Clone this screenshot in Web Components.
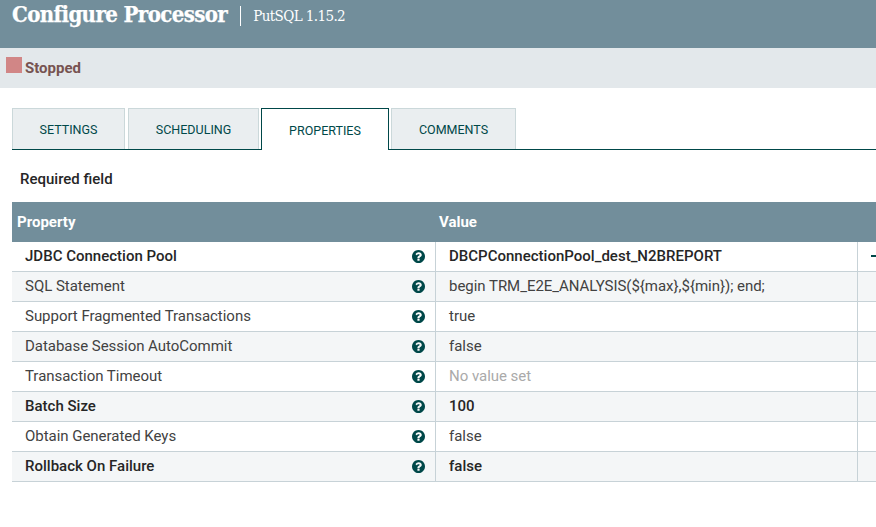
<!DOCTYPE html>
<html lang="en">
<head>
<meta charset="utf-8">
<title>Configure Processor</title>
<style>
html,body{margin:0;padding:0;background:#fff;height:527px;overflow:hidden}
body{font-family:Roboto,"Liberation Sans",sans-serif;color:#262626;display:flex;flex-direction:column;width:876px}
</style>
</head>
<body>
<nf-header title-text="Configure Processor" sub="PutSQL 1.15.2"></nf-header>
<nf-status>Stopped</nf-status>
<nf-tabs>
  <nf-tab w="113">SETTINGS</nf-tab>
  <nf-tab w="131">SCHEDULING</nf-tab>
  <nf-tab w="128" active>PROPERTIES</nf-tab>
  <nf-tab w="125">COMMENTS</nf-tab>
</nf-tabs>
<nf-required>Required field</nf-required>
<nf-table>
  <nf-row name="JDBC Connection Pool" value="DBCPConnectionPool_dest_N2BREPORT" strong action></nf-row>
  <nf-row name="SQL Statement" value="begin TRM_E2E_ANALYSIS(${max},${min}); end;" alt></nf-row>
  <nf-row name="Support Fragmented Transactions" value="true"></nf-row>
  <nf-row name="Database Session AutoCommit" value="false" alt></nf-row>
  <nf-row name="Transaction Timeout" value="No value set" unset></nf-row>
  <nf-row name="Batch Size" value="100" strong alt></nf-row>
  <nf-row name="Obtain Generated Keys" value="false"></nf-row>
  <nf-row name="Rollback On Failure" value="false" strong alt></nf-row>
</nf-table>
<script>
function shadow(el,html){el.attachShadow({mode:'open'}).innerHTML=html;}
customElements.define('nf-header',class extends HTMLElement{
  connectedCallback(){
    shadow(this,`<style>
      :host{display:flex;height:48px;background:#728e9b;color:#fff;padding:0 0 0 12px;box-sizing:border-box;overflow:hidden;flex:none}
      .row{display:flex;align-items:flex-start;height:28px}
      .t{font:700 22px/28px "DejaVu Serif Condensed","DejaVu Serif",serif;font-stretch:condensed;letter-spacing:-.6px;white-space:nowrap;-webkit-text-stroke:.25px #fff}
      .sep{width:1px;height:20px;background:#fff;margin:6px 12px 0 13px}
      .s{font:400 15px/33px "DejaVu Serif Condensed","DejaVu Serif",serif;font-stretch:condensed;letter-spacing:-.6px;white-space:nowrap}
    </style><div class="row"><span class="t">${this.getAttribute('title-text')}</span><span class="sep"></span><span class="s">${this.getAttribute('sub')}</span></div>`);
  }
});
customElements.define('nf-status',class extends HTMLElement{
  connectedCallback(){
    shadow(this,`<style>
      :host{display:flex;height:40px;background:#e3e8eb;box-sizing:border-box;padding:9px 0 0 6px;flex:none;align-items:flex-start;gap:3px}
      .sq{width:16px;height:16px;background:#d18686;flex:none}
      .l{font:700 15px/22px Roboto,sans-serif;color:#775351}
    </style><span class="sq"></span><span class="l"><slot></slot></span>`);
  }
});
customElements.define('nf-tabs',class extends HTMLElement{
  connectedCallback(){
    shadow(this,`<style>
      :host{display:flex;gap:2px;margin:20px 0 0 12px;height:42px;box-sizing:border-box;border-bottom:1px solid #004849;flex:none}
      ::slotted(nf-tab:nth-child(1)){margin-right:1px}
    </style><slot></slot>`);
  }
});
customElements.define('nf-tab',class extends HTMLElement{
  connectedCallback(){
    const a=this.hasAttribute('active');
    shadow(this,`<style>
      :host{display:flex;box-sizing:border-box;width:${this.getAttribute('w')}px;height:${a?42:41}px;align-items:center;justify-content:center;
        font:400 12.5px/16px Roboto,sans-serif;color:#004849;
        background:${a?'#fff':'#eaeef0'};border:1px solid ${a?'#004849':'#cbd8da'};border-bottom:0;padding-top:${a?3:2}px;z-index:${a?1:0}}
    </style><slot></slot>`);
  }
});
customElements.define('nf-required',class extends HTMLElement{
  connectedCallback(){
    shadow(this,`<style>
      :host{display:block;box-sizing:border-box;height:52px;padding:21px 0 0 20px;font:500 15px/17px Roboto,sans-serif;color:#262626;flex:none}
    </style><slot></slot>`);
  }
});
customElements.define('nf-table',class extends HTMLElement{
  connectedCallback(){
    shadow(this,`<style>
      :host{display:block;margin-left:12px;flex:none}
      .h{display:grid;grid-template-columns:423px 1fr;height:40px;background:#728e9b;color:#fff;font:700 15px/40px Roboto,sans-serif}
      .h div{padding-left:5px}.h div+div{padding-left:4px}
    </style><div class="h"><div>Property</div><div>Value</div></div><slot></slot>`);
  }
});
const Q='M896 1376v-192q0-14-9-23t-23-9h-192q-14 0-23 9t-9 23v192q0 14 9 23t23 9h192q14 0 23-9t9-23zm256-672q0-88-55.5-163t-138.5-116-170-41q-243 0-371 213-15 24 8 42l132 100q7 6 19 6 16 0 25-12 53-68 86-92 34-24 86-24 48 0 85.5 26t37.5 59q0 38-20 61t-68 45q-63 28-115.5 86.5t-52.5 125.5v36q0 14 9 23t23 9h192q14 0 23-9t9-23q0-19 21.5-49.5t54.5-49.5q32-18 49-28.5t46-35 44.5-48 28-60.5 12.5-81zm384 192q0 209-103 385.5t-279.5 279.5-385.5 103-385.5-103-279.5-279.5-103-385.5 103-385.5 279.5-279.5 385.5-103 385.5 103 279.5 279.5 103 385.5z';
customElements.define('nf-row',class extends HTMLElement{
  connectedCallback(){
    const g=n=>this.hasAttribute(n), s=g('strong');
    const tc=s?'#262626':'#424242';
    const vc=g('unset')?'#aaa':tc;
    shadow(this,`<style>
      :host{display:grid;grid-template-columns:423px 422px 1fr;height:30px;box-sizing:border-box;border-bottom:1px solid #c7d2d7;background:${g('alt')?'#f4f6f7':'#fff'};
        font:${s?500:400} 15px/29px Roboto,sans-serif;color:${tc};letter-spacing:${s?'.01px':'-.03px'}}
      .c{display:flex;align-items:center;box-sizing:border-box;white-space:nowrap}
      .n{padding-left:13px;justify-content:space-between;padding-right:10px}
      svg{width:13px;height:13px;fill:#004849;display:block;flex:none;margin-top:-1px}
      .v{border-left:1px solid #c7d2d7;padding-left:13px;color:${vc}}
      .a{border-left:1px solid #c7d2d7;padding-left:13px;overflow:hidden}
      .d{width:10px;height:2px;background:#004849;flex:none;margin-top:-1px}
    </style><div class="c n"><span>${this.getAttribute('name')}</span><svg viewBox="0 128 1536 1536"><path d="${Q}"/></svg></div><div class="c v">${this.getAttribute('value')}</div><div class="c a">${g('action')?'<span class="d"></span>':''}</div>`);
  }
});
</script>
</body>
</html>
